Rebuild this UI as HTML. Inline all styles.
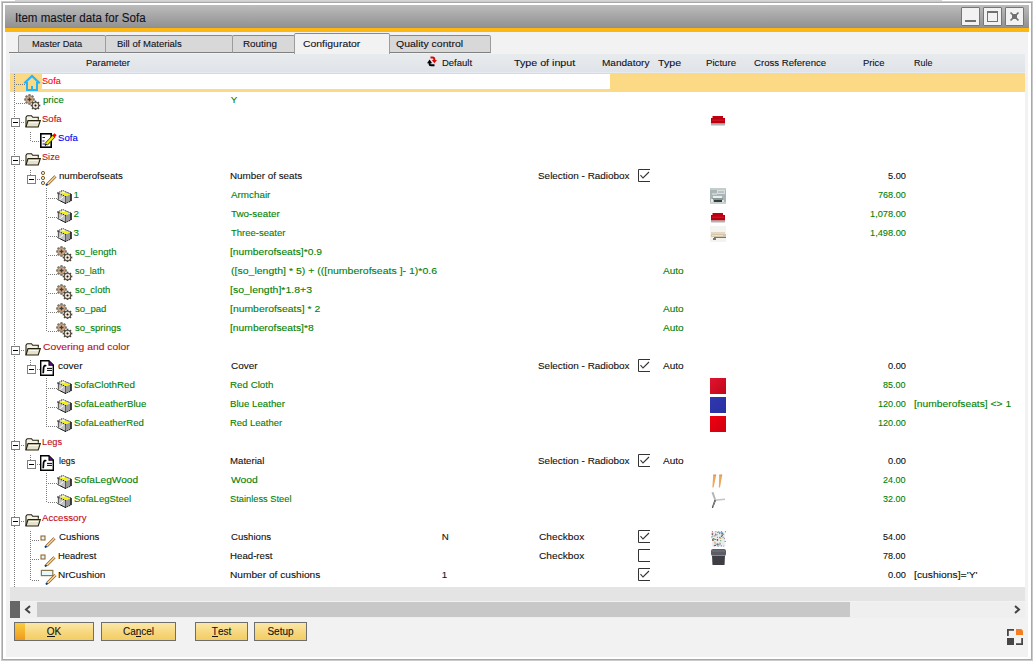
<!DOCTYPE html>
<html><head><meta charset="utf-8">
<style>
*{box-sizing:border-box}
html,body{margin:0;padding:0;width:1036px;height:665px;overflow:hidden;background:#fff;font-family:"Liberation Sans",sans-serif;font-size:10px}
.a{position:absolute}
.t{position:absolute;white-space:nowrap;-webkit-text-stroke:0.1px currentColor}
.ic{position:absolute;line-height:0}
.ic svg{display:block}
.vl{position:absolute;width:1px;background:repeating-linear-gradient(to bottom,#7a7a7a 0 1px,transparent 1px 2px)}
.hl{position:absolute;height:1px;background:repeating-linear-gradient(to right,#7a7a7a 0 1px,transparent 1px 2px)}
.tab{position:absolute;top:35px;height:18px;background:#d8d8d8;border:1px solid #9c9c9c;border-top-color:#888;border-bottom:1px solid #808080;border-radius:2px 2px 0 0}
.btn{position:absolute;top:622px;height:19px;-webkit-text-stroke:0.1px currentColor;border:1px solid #6e6e6e;background:linear-gradient(to bottom,#fbe7a8,#f6d67a 60%,#f3cd62);font-size:10px;line-height:17px;text-align:center;color:#141414}
.btn u{text-decoration:none;border-bottom:1px solid #141414;display:inline-block;line-height:9px}
.wb{position:absolute;top:7px;width:19px;height:19px;border:1px solid #767676;border-radius:1px;background:#f2f2f2}
</style></head><body>
<div class="a" style="left:15px;top:0;width:927px;height:1px;background:#d4d4d4"></div>
<div class="a" style="left:1px;top:1px;width:1032px;height:660px;background:#cacaca"></div>
<div class="a" style="left:2px;top:2px;width:1030px;height:658px;background:#a8a8a8"></div>
<div class="a" style="left:3px;top:3px;width:1028px;height:656px;background:#fff"></div>
<div class="a" style="left:6px;top:32px;width:1022px;height:625px;background:#f2f2f2"></div>
<div class="a" style="left:6px;top:32px;width:1022px;height:1px;background:#eef1f6"></div>
<div class="a" style="left:5px;top:5px;width:1024px;height:23px;background:linear-gradient(to bottom,#bcbcbc,#909090)"></div>
<div class="a" style="left:5px;top:27px;width:1024px;height:1px;background:#8a9098"></div>
<div class="a" style="left:5px;top:28px;width:1024px;height:4px;background:#fdb712"></div>
<div class="t" id="title" style="left:14.80px;top:7px;color:#14101a;font-size:12px;line-height:23px;height:23px;transform:scaleX(0.9647);transform-origin:0 0;">Item master data for Sofa</div>
<div class="wb" style="left:961px"><div class="a" style="left:3px;top:12px;width:11px;height:2px;background:#707070"></div></div>
<div class="wb" style="left:983px"><div class="a" style="left:3px;top:3px;width:11px;height:11px;border:1px solid #707070;border-top-width:2px"></div></div>
<div class="wb" style="left:1005px"><svg class="a" style="left:3px;top:3px" width="11" height="11" viewBox="0 0 11 11"><path d="M1.5 1.5 L9.5 9.5 M9.5 1.5 L1.5 9.5" stroke="#707070" stroke-width="1.7"/><rect x="3" y="3" width="5" height="5" fill="#707070"/></svg></div>

<div class="a" style="left:9px;top:52px;width:482px;height:1px;background:#808080"></div>
<div class="tab" style="left:18px;width:88px"></div>
<div class="tab" style="left:105px;width:128px"></div>
<div class="tab" style="left:232px;width:63px"></div>
<div class="tab" style="left:389px;width:102px"></div>
<div class="tab" style="left:294px;top:33px;height:21px;width:96px;background:#f2f2f2;border-bottom:none"></div>
<div class="t" id="tab_md" style="left:31.60px;top:36px;color:#101018;font-size:9.75px;line-height:16px;height:16px;transform:scaleX(0.9444);transform-origin:0 0;">Master Data</div>
<div class="t" id="tab_bom" style="left:117.40px;top:36px;color:#101018;font-size:9.75px;line-height:16px;height:16px;transform:scaleX(0.9788);transform-origin:0 0;">Bill of Materials</div>
<div class="t" id="tab_rt" style="left:242.90px;top:36px;color:#101018;font-size:9.75px;line-height:16px;height:16px;transform:scaleX(1.0088);transform-origin:0 0;">Routing</div>
<div class="t" id="tab_cf" style="left:303.20px;top:36px;color:#101018;font-size:9.75px;line-height:16px;height:16px;transform:scaleX(1.0685);transform-origin:0 0;">Configurator</div>
<div class="t" id="tab_qc" style="left:396.30px;top:36px;color:#101018;font-size:9.75px;line-height:16px;height:16px;transform:scaleX(1.0758);transform-origin:0 0;">Quality control</div>


<div class="a" style="left:10px;top:54px;width:1015px;height:19px;background:linear-gradient(to bottom,#e8ebee,#dfe3e7)"></div><div class="a" style="left:10px;top:72px;width:1015px;height:1px;background:#e5e9f1"></div>
<div class="a" style="left:10px;top:73px;width:1015px;height:514px;background:#fff"></div>
<div class="a" style="left:10px;top:587px;width:1015px;height:14px;background:#e4e4e4"></div>
<svg class="a" style="left:422px;top:52px" width="20" height="20" viewBox="0 0 20 20"><path d="M8.5 5.5 H10.5 Q12.3 5.5 12.3 7.3 V8.5" fill="none" stroke="#d40a0a" stroke-width="2"/><path d="M9.8 8 L15 8 L12.4 11.2 Z" fill="#d40a0a"/><path d="M7.6 11 V11.8 Q7.6 13.3 9.2 13.3 H12.5" fill="none" stroke="#000" stroke-width="2"/><path d="M5 11.2 L10.2 11.2 L7.6 7.6 Z" fill="#000"/></svg>
<div class="t" id="h_param" style="left:86.20px;top:53px;color:#101020;font-size:9.75px;line-height:19px;height:19px;transform:scaleX(0.9652);transform-origin:0 0;">Parameter</div>
<div class="t" id="h_def" style="left:442.20px;top:53px;color:#101020;font-size:9.75px;line-height:19px;height:19px;transform:scaleX(0.9719);transform-origin:0 0;">Default</div>
<div class="t" id="h_toi" style="left:513.80px;top:53px;color:#101020;font-size:9.75px;line-height:19px;height:19px;transform:scaleX(1.0964);transform-origin:0 0;">Type of input</div>
<div class="t" id="h_mand" style="left:602.30px;top:53px;color:#101020;font-size:9.75px;line-height:19px;height:19px;transform:scaleX(1.0298);transform-origin:0 0;">Mandatory</div>
<div class="t" id="h_type" style="left:658.10px;top:53px;color:#101020;font-size:9.75px;line-height:19px;height:19px;transform:scaleX(1.0905);transform-origin:0 0;">Type</div>
<div class="t" id="h_pic" style="left:706.20px;top:53px;color:#101020;font-size:9.75px;line-height:19px;height:19px;transform:scaleX(0.9903);transform-origin:0 0;">Picture</div>
<div class="t" id="h_xref" style="left:754.20px;top:53px;color:#101020;font-size:9.75px;line-height:19px;height:19px;transform:scaleX(0.9863);transform-origin:0 0;">Cross Reference</div>
<div class="t" id="h_price" style="left:862.60px;top:53px;color:#101020;font-size:9.75px;line-height:19px;height:19px;transform:scaleX(0.9682);transform-origin:0 0;">Price</div>
<div class="t" id="h_rule" style="left:914.30px;top:53px;color:#101020;font-size:9.75px;line-height:19px;height:19px;transform:scaleX(0.9150);transform-origin:0 0;">Rule</div>

<div class="a" style="left:10px;top:73px;width:1015px;height:19px;background:#fbd985"></div>
<div class="a" style="left:42px;top:74px;width:568px;height:15px;background:#fff"></div>
<div class="vl" style="left:14px;top:74px;height:513px"></div>
<div class="hl" style="left:16px;top:84px;width:9px"></div>
<div class="hl" style="left:16px;top:103px;width:9px"></div>
<div class="hl" style="left:21px;top:122px;width:4px"></div>
<div class="hl" style="left:32px;top:141px;width:8px"></div>
<div class="hl" style="left:21px;top:160px;width:4px"></div>
<div class="hl" style="left:37px;top:179px;width:4px"></div>
<div class="hl" style="left:48px;top:198px;width:9px"></div>
<div class="hl" style="left:48px;top:217px;width:9px"></div>
<div class="hl" style="left:48px;top:236px;width:9px"></div>
<div class="hl" style="left:48px;top:255px;width:9px"></div>
<div class="hl" style="left:48px;top:274px;width:9px"></div>
<div class="hl" style="left:48px;top:293px;width:9px"></div>
<div class="hl" style="left:48px;top:312px;width:9px"></div>
<div class="hl" style="left:48px;top:331px;width:9px"></div>
<div class="hl" style="left:21px;top:350px;width:4px"></div>
<div class="hl" style="left:37px;top:369px;width:4px"></div>
<div class="hl" style="left:48px;top:388px;width:9px"></div>
<div class="hl" style="left:48px;top:407px;width:9px"></div>
<div class="hl" style="left:48px;top:426px;width:9px"></div>
<div class="hl" style="left:21px;top:445px;width:4px"></div>
<div class="hl" style="left:37px;top:464px;width:4px"></div>
<div class="hl" style="left:48px;top:483px;width:9px"></div>
<div class="hl" style="left:48px;top:502px;width:9px"></div>
<div class="hl" style="left:21px;top:521px;width:4px"></div>
<div class="hl" style="left:32px;top:540px;width:8px"></div>
<div class="hl" style="left:32px;top:559px;width:8px"></div>
<div class="hl" style="left:32px;top:580px;width:8px"></div>
<div class="vl" style="left:30px;top:132px;height:10px"></div>
<div class="vl" style="left:30px;top:170px;height:10px"></div>
<div class="vl" style="left:46px;top:188px;height:144px"></div>
<div class="vl" style="left:30px;top:360px;height:10px"></div>
<div class="vl" style="left:46px;top:378px;height:49px"></div>
<div class="vl" style="left:30px;top:455px;height:10px"></div>
<div class="vl" style="left:46px;top:473px;height:30px"></div>
<div class="vl" style="left:30px;top:531px;height:50px"></div>
<div class="ic" style="left:11px;top:118px"><svg width="9" height="9" viewBox="0 0 9 9"><rect x="0.5" y="0.5" width="8" height="8" fill="#fff" stroke="#808080"/><path d="M2 4.5 H7" stroke="#000" stroke-width="1"/></svg></div>
<div class="ic" style="left:11px;top:156px"><svg width="9" height="9" viewBox="0 0 9 9"><rect x="0.5" y="0.5" width="8" height="8" fill="#fff" stroke="#808080"/><path d="M2 4.5 H7" stroke="#000" stroke-width="1"/></svg></div>
<div class="ic" style="left:27px;top:175px"><svg width="9" height="9" viewBox="0 0 9 9"><rect x="0.5" y="0.5" width="8" height="8" fill="#fff" stroke="#808080"/><path d="M2 4.5 H7" stroke="#000" stroke-width="1"/></svg></div>
<div class="ic" style="left:11px;top:346px"><svg width="9" height="9" viewBox="0 0 9 9"><rect x="0.5" y="0.5" width="8" height="8" fill="#fff" stroke="#808080"/><path d="M2 4.5 H7" stroke="#000" stroke-width="1"/></svg></div>
<div class="ic" style="left:27px;top:365px"><svg width="9" height="9" viewBox="0 0 9 9"><rect x="0.5" y="0.5" width="8" height="8" fill="#fff" stroke="#808080"/><path d="M2 4.5 H7" stroke="#000" stroke-width="1"/></svg></div>
<div class="ic" style="left:11px;top:441px"><svg width="9" height="9" viewBox="0 0 9 9"><rect x="0.5" y="0.5" width="8" height="8" fill="#fff" stroke="#808080"/><path d="M2 4.5 H7" stroke="#000" stroke-width="1"/></svg></div>
<div class="ic" style="left:27px;top:460px"><svg width="9" height="9" viewBox="0 0 9 9"><rect x="0.5" y="0.5" width="8" height="8" fill="#fff" stroke="#808080"/><path d="M2 4.5 H7" stroke="#000" stroke-width="1"/></svg></div>
<div class="ic" style="left:11px;top:517px"><svg width="9" height="9" viewBox="0 0 9 9"><rect x="0.5" y="0.5" width="8" height="8" fill="#fff" stroke="#808080"/><path d="M2 4.5 H7" stroke="#000" stroke-width="1"/></svg></div>
<div class="ic" style="left:23px;top:74px"><svg width="18" height="18" viewBox="0 0 18 18"><path d="M1.3 9.2 L9 2 L16.7 9.2" fill="none" stroke="#25b4fa" stroke-width="2.2"/><path d="M4 8 V16 H14 V8" fill="none" stroke="#25b4fa" stroke-width="2"/><rect x="8" y="12" width="2" height="4" fill="#25b4fa"/></svg></div>
<div class="t" id="p0" style="left:42.37px;top:71px;color:#ff0000;font-size:9.75px;line-height:19px;height:19px;transform:scaleX(0.9381);transform-origin:0 0;">Sofa</div>
<div class="ic" style="left:23px;top:92px"><svg width="18" height="18" viewBox="0 0 18 18"><g transform="translate(6.5,7.5)"><rect x="-1.1" y="-5.4" width="2.2" height="2.4" fill="#7e7c6c" transform="rotate(0)"/><rect x="-1.1" y="-5.4" width="2.2" height="2.4" fill="#7e7c6c" transform="rotate(45)"/><rect x="-1.1" y="-5.4" width="2.2" height="2.4" fill="#7e7c6c" transform="rotate(90)"/><rect x="-1.1" y="-5.4" width="2.2" height="2.4" fill="#7e7c6c" transform="rotate(135)"/><rect x="-1.1" y="-5.4" width="2.2" height="2.4" fill="#7e7c6c" transform="rotate(180)"/><rect x="-1.1" y="-5.4" width="2.2" height="2.4" fill="#7e7c6c" transform="rotate(225)"/><rect x="-1.1" y="-5.4" width="2.2" height="2.4" fill="#7e7c6c" transform="rotate(270)"/><rect x="-1.1" y="-5.4" width="2.2" height="2.4" fill="#7e7c6c" transform="rotate(315)"/><circle r="4.2" fill="#7e7c6c"/><circle r="3.3000000000000003" fill="#d9a886"/><path d="M-2 0 H2 M0 -2 V2" stroke="#3a4040" stroke-width="1.3"/></g><g transform="translate(12.5,13.5)"><rect x="-0.9" y="-4.8" width="1.8" height="2.4" fill="#4a4438" transform="rotate(0)"/><rect x="-0.9" y="-4.8" width="1.8" height="2.4" fill="#4a4438" transform="rotate(45)"/><rect x="-0.9" y="-4.8" width="1.8" height="2.4" fill="#4a4438" transform="rotate(90)"/><rect x="-0.9" y="-4.8" width="1.8" height="2.4" fill="#4a4438" transform="rotate(135)"/><rect x="-0.9" y="-4.8" width="1.8" height="2.4" fill="#4a4438" transform="rotate(180)"/><rect x="-0.9" y="-4.8" width="1.8" height="2.4" fill="#4a4438" transform="rotate(225)"/><rect x="-0.9" y="-4.8" width="1.8" height="2.4" fill="#4a4438" transform="rotate(270)"/><rect x="-0.9" y="-4.8" width="1.8" height="2.4" fill="#4a4438" transform="rotate(315)"/><circle r="3.6" fill="#4a4438"/><circle r="2.7" fill="#f0e4dc"/><path d="M-2.4 0 H2.4 M0 -2.4 V2.4" stroke="#e8c8b8" stroke-width="0.8"/><circle r="1" fill="#111"/></g></svg></div>
<div class="t" id="p1" style="left:42.99px;top:90px;color:#008000;font-size:9.75px;line-height:19px;height:19px;transform:scaleX(0.9818);transform-origin:0 0;">price</div>
<div class="t" id="d1" style="left:230.80px;top:90px;color:#008000;font-size:9.75px;line-height:19px;height:19px;">Y</div>
<div class="ic" style="left:25px;top:115px"><svg width="16" height="13" viewBox="0 0 16 13"><path d="M1 12 V2.2 L2.2 0.7 H6.5 L7.7 2.3 H13.3 V4.8" fill="#f4f2e4" stroke="#24200e" stroke-width="1.1"/><path d="M1 12 L3 5.6 H15.3 L13.2 12 Z" fill="#e6e3cc" stroke="#24200e" stroke-width="1.1"/><path d="M4 7.5 H13" stroke="#f8f8f0" stroke-width="1"/></svg></div>
<div class="t" id="p2" style="left:41.51px;top:109px;color:#c00c18;font-size:9.75px;line-height:19px;height:19px;transform:scaleX(0.9800);transform-origin:0 0;">Sofa</div>
<div class="ic" style="left:710px;top:115px"><svg width="16" height="12" viewBox="0 0 16 12"><rect x="2.5" y="1" width="10.5" height="3" fill="#c00012"/><rect x="1" y="3" width="14" height="5.5" fill="#b8000e"/><rect x="2" y="4.5" width="12" height="1.5" fill="#d01020"/><rect x="1" y="8.5" width="14" height="2" fill="#9aa0a0" opacity="0.8"/></svg></div>
<div class="ic" style="left:40px;top:133px"><svg width="17" height="15" viewBox="0 0 17 15"><rect x="0.8" y="0.8" width="10.4" height="13.4" fill="#fff" stroke="#000" stroke-width="1.6"/><path d="M2.5 4.5 H5 M2.5 8 H4.5 M2.5 11 H5" stroke="#1a2060" stroke-width="1.2"/><path d="M6.2 11.2 L14.2 2.8" stroke="#3a3a00" stroke-width="3.6"/><path d="M6.2 11.2 L14 3" stroke="#f0f000" stroke-width="2.2"/><path d="M13.3 3.5 L15.6 1.2" stroke="#ff0000" stroke-width="3"/><path d="M5 12.5 L6.5 11" stroke="#000" stroke-width="1.5"/></svg></div>
<div class="t" id="p3" style="left:57.81px;top:128px;color:#0000f0;font-size:9.75px;line-height:19px;height:19px;transform:scaleX(0.9850);transform-origin:0 0;">Sofa</div>
<div class="ic" style="left:25px;top:153px"><svg width="16" height="13" viewBox="0 0 16 13"><path d="M1 12 V2.2 L2.2 0.7 H6.5 L7.7 2.3 H13.3 V4.8" fill="#f4f2e4" stroke="#24200e" stroke-width="1.1"/><path d="M1 12 L3 5.6 H15.3 L13.2 12 Z" fill="#e6e3cc" stroke="#24200e" stroke-width="1.1"/><path d="M4 7.5 H13" stroke="#f8f8f0" stroke-width="1"/></svg></div>
<div class="t" id="p4" style="left:41.53px;top:147px;color:#c00c18;font-size:9.75px;line-height:19px;height:19px;transform:scaleX(0.9389);transform-origin:0 0;">Size</div>
<div class="ic" style="left:41px;top:171px"><svg width="17" height="15" viewBox="0 0 17 15"><g fill="#dffaff" stroke="#8a5a1a" stroke-width="1"><circle cx="2" cy="2" r="1.6"/><circle cx="2" cy="7" r="1.6"/><circle cx="2" cy="12" r="1.6"/></g><path d="M6.5 13.2 L14.5 5.2" stroke="#8a5a1a" stroke-width="3"/><path d="M6.5 13.2 L14.5 5.2" stroke="#f8d8a0" stroke-width="1.6"/><path d="M5 14.5 L6.5 13" stroke="#0a3a7a" stroke-width="2"/></svg></div>
<div class="t" id="p5" style="left:58.99px;top:166px;color:#101010;font-size:9.75px;line-height:19px;height:19px;transform:scaleX(0.9892);transform-origin:0 0;">numberofseats</div>
<div class="t" id="d5" style="left:229.80px;top:166px;color:#101010;font-size:9.75px;line-height:19px;height:19px;transform:scaleX(1.0085);transform-origin:0 0;">Number of seats</div>
<div class="t" id="ti5" style="left:537.69px;top:166px;color:#101010;font-size:9.75px;line-height:19px;height:19px;transform:scaleX(1.0178);transform-origin:0 0;">Selection - Radiobox</div>
<div class="ic" style="left:638px;top:169px"><svg width="13" height="13" viewBox="0 0 13 13"><path d="M12 0.5 H0.5 V12.5 H12" fill="none" stroke="#333" stroke-width="1"/><path d="M2.5 6.2 L5 9 L11 3" fill="none" stroke="#333" stroke-width="1.1"/></svg></div>
<div class="t" id="pr5" style="left:888.00px;top:166px;color:#101010;font-size:9.75px;line-height:19px;height:19px;transform:scaleX(0.9474);transform-origin:0 0;">5.00</div>
<div class="ic" style="left:57px;top:190px"><svg width="15" height="14" viewBox="0 0 15 14"><path d="M0.5 3 L5.5 0.5 L14.5 4 L14.5 11 L8.5 13.5 L0.5 9.5 Z" fill="#c4c4c4"/><path d="M8.5 6.5 L14.5 4 L14.5 11 L8.5 13.5 Z" fill="#9a9a9a"/><path d="M0.5 3 L5.5 0.5 L14.5 4 L8.5 6.5 Z" fill="#d8d8d8"/><path d="M2.5 3.2 L6 1.8 L12.5 4.5 L9 6 Z" fill="#f4f400"/><path d="M0.5 3 L5.5 0.5 L14 4 M8.5 13.5 L0.5 9.5 Z M0.5 3 L8.5 6.5 M8.5 6.5 V13.5 M8.5 13.5 L14 11" fill="none" stroke="#000" stroke-width="1" stroke-dasharray="1 1"/><path d="M14 4 V11" stroke="#000" stroke-width="1.3"/><path d="M1.5 3.5 V9.5" stroke="#000" stroke-width="1" stroke-dasharray="1 1"/><path d="M2.5 10 L6.5 6.5" stroke="#fff" stroke-width="1"/><rect x="5.5" y="1.5" width="2" height="1.5" fill="#fff"/></svg></div>
<div class="t" id="p6" style="left:73.50px;top:185px;color:#008000;font-size:9.75px;line-height:19px;height:19px;">1</div>
<div class="t" id="d6" style="left:230.81px;top:185px;color:#008000;font-size:9.75px;line-height:19px;height:19px;transform:scaleX(1.0100);transform-origin:0 0;">Armchair</div>
<div class="ic" style="left:710px;top:188px"><svg width="16" height="16" viewBox="0 0 16 16"><rect width="16" height="16" fill="#aab6b6"/><rect x="0" y="0" width="16" height="2" fill="#c4cccc"/><rect x="7" y="2" width="8" height="4" fill="#d6dede"/><path d="M8.5 4 H14" stroke="#6a7474" stroke-width="1" stroke-dasharray="1 1"/><rect x="2" y="5" width="5" height="2" fill="#c8d0d0"/><rect x="3" y="8" width="9" height="2" fill="#e8eeee"/><rect x="2" y="10" width="11" height="2" fill="#8c9898"/><rect x="4" y="12" width="9" height="2" fill="#353d3d"/><rect x="1" y="11" width="2" height="3" fill="#e6ecec"/><rect x="12" y="12" width="2" height="2" fill="#e0e6e6"/><rect x="0" y="14" width="16" height="2" fill="#c8d2d2"/></svg></div>
<div class="t" id="pr6" style="left:878.00px;top:185px;color:#008000;font-size:9.75px;line-height:19px;height:19px;transform:scaleX(0.9333);transform-origin:0 0;">768.00</div>
<div class="ic" style="left:57px;top:209px"><svg width="15" height="14" viewBox="0 0 15 14"><path d="M0.5 3 L5.5 0.5 L14.5 4 L14.5 11 L8.5 13.5 L0.5 9.5 Z" fill="#c4c4c4"/><path d="M8.5 6.5 L14.5 4 L14.5 11 L8.5 13.5 Z" fill="#9a9a9a"/><path d="M0.5 3 L5.5 0.5 L14.5 4 L8.5 6.5 Z" fill="#d8d8d8"/><path d="M2.5 3.2 L6 1.8 L12.5 4.5 L9 6 Z" fill="#f4f400"/><path d="M0.5 3 L5.5 0.5 L14 4 M8.5 13.5 L0.5 9.5 Z M0.5 3 L8.5 6.5 M8.5 6.5 V13.5 M8.5 13.5 L14 11" fill="none" stroke="#000" stroke-width="1" stroke-dasharray="1 1"/><path d="M14 4 V11" stroke="#000" stroke-width="1.3"/><path d="M1.5 3.5 V9.5" stroke="#000" stroke-width="1" stroke-dasharray="1 1"/><path d="M2.5 10 L6.5 6.5" stroke="#fff" stroke-width="1"/><rect x="5.5" y="1.5" width="2" height="1.5" fill="#fff"/></svg></div>
<div class="t" id="p7" style="left:73.50px;top:204px;color:#008000;font-size:9.75px;line-height:19px;height:19px;">2</div>
<div class="t" id="d7" style="left:230.81px;top:204px;color:#008000;font-size:9.75px;line-height:19px;height:19px;transform:scaleX(1.0102);transform-origin:0 0;">Two-seater</div>
<div class="ic" style="left:710px;top:212px"><svg width="16" height="12" viewBox="0 0 16 12"><rect x="2.5" y="1" width="10.5" height="3" fill="#c00012"/><rect x="1" y="3" width="14" height="5.5" fill="#b8000e"/><rect x="2" y="4.5" width="12" height="1.5" fill="#d01020"/><rect x="1" y="8.5" width="14" height="2" fill="#9aa0a0" opacity="0.8"/></svg></div>
<div class="t" id="pr7" style="left:870.00px;top:204px;color:#008000;font-size:9.75px;line-height:19px;height:19px;transform:scaleX(0.9474);transform-origin:0 0;">1,078.00</div>
<div class="ic" style="left:57px;top:228px"><svg width="15" height="14" viewBox="0 0 15 14"><path d="M0.5 3 L5.5 0.5 L14.5 4 L14.5 11 L8.5 13.5 L0.5 9.5 Z" fill="#c4c4c4"/><path d="M8.5 6.5 L14.5 4 L14.5 11 L8.5 13.5 Z" fill="#9a9a9a"/><path d="M0.5 3 L5.5 0.5 L14.5 4 L8.5 6.5 Z" fill="#d8d8d8"/><path d="M2.5 3.2 L6 1.8 L12.5 4.5 L9 6 Z" fill="#f4f400"/><path d="M0.5 3 L5.5 0.5 L14 4 M8.5 13.5 L0.5 9.5 Z M0.5 3 L8.5 6.5 M8.5 6.5 V13.5 M8.5 13.5 L14 11" fill="none" stroke="#000" stroke-width="1" stroke-dasharray="1 1"/><path d="M14 4 V11" stroke="#000" stroke-width="1.3"/><path d="M1.5 3.5 V9.5" stroke="#000" stroke-width="1" stroke-dasharray="1 1"/><path d="M2.5 10 L6.5 6.5" stroke="#fff" stroke-width="1"/><rect x="5.5" y="1.5" width="2" height="1.5" fill="#fff"/></svg></div>
<div class="t" id="p8" style="left:73.50px;top:223px;color:#008000;font-size:9.75px;line-height:19px;height:19px;">3</div>
<div class="t" id="d8" style="left:230.79px;top:223px;color:#008000;font-size:9.75px;line-height:19px;height:19px;transform:scaleX(0.9754);transform-origin:0 0;">Three-seater</div>
<div class="ic" style="left:710px;top:226px"><svg width="16" height="16" viewBox="0 0 16 16"><rect width="16" height="16" fill="#f5f3ef"/><rect x="1" y="6" width="14" height="2" fill="#e2d8c2"/><rect x="1" y="8" width="15" height="3" fill="#d4c8ac"/><rect x="2" y="9" width="11" height="1" fill="#e8e0cc"/><rect x="4" y="11" width="12" height="1" fill="#5a5650" opacity="0.8"/><rect x="3" y="12" width="3" height="2" fill="#7a7a7a"/></svg></div>
<div class="t" id="pr8" style="left:870.00px;top:223px;color:#008000;font-size:9.75px;line-height:19px;height:19px;transform:scaleX(0.9474);transform-origin:0 0;">1,498.00</div>
<div class="ic" style="left:55px;top:244px"><svg width="18" height="18" viewBox="0 0 18 18"><g transform="translate(6.5,7.5)"><rect x="-1.1" y="-5.4" width="2.2" height="2.4" fill="#7e7c6c" transform="rotate(0)"/><rect x="-1.1" y="-5.4" width="2.2" height="2.4" fill="#7e7c6c" transform="rotate(45)"/><rect x="-1.1" y="-5.4" width="2.2" height="2.4" fill="#7e7c6c" transform="rotate(90)"/><rect x="-1.1" y="-5.4" width="2.2" height="2.4" fill="#7e7c6c" transform="rotate(135)"/><rect x="-1.1" y="-5.4" width="2.2" height="2.4" fill="#7e7c6c" transform="rotate(180)"/><rect x="-1.1" y="-5.4" width="2.2" height="2.4" fill="#7e7c6c" transform="rotate(225)"/><rect x="-1.1" y="-5.4" width="2.2" height="2.4" fill="#7e7c6c" transform="rotate(270)"/><rect x="-1.1" y="-5.4" width="2.2" height="2.4" fill="#7e7c6c" transform="rotate(315)"/><circle r="4.2" fill="#7e7c6c"/><circle r="3.3000000000000003" fill="#d9a886"/><path d="M-2 0 H2 M0 -2 V2" stroke="#3a4040" stroke-width="1.3"/></g><g transform="translate(12.5,13.5)"><rect x="-0.9" y="-4.8" width="1.8" height="2.4" fill="#4a4438" transform="rotate(0)"/><rect x="-0.9" y="-4.8" width="1.8" height="2.4" fill="#4a4438" transform="rotate(45)"/><rect x="-0.9" y="-4.8" width="1.8" height="2.4" fill="#4a4438" transform="rotate(90)"/><rect x="-0.9" y="-4.8" width="1.8" height="2.4" fill="#4a4438" transform="rotate(135)"/><rect x="-0.9" y="-4.8" width="1.8" height="2.4" fill="#4a4438" transform="rotate(180)"/><rect x="-0.9" y="-4.8" width="1.8" height="2.4" fill="#4a4438" transform="rotate(225)"/><rect x="-0.9" y="-4.8" width="1.8" height="2.4" fill="#4a4438" transform="rotate(270)"/><rect x="-0.9" y="-4.8" width="1.8" height="2.4" fill="#4a4438" transform="rotate(315)"/><circle r="3.6" fill="#4a4438"/><circle r="2.7" fill="#f0e4dc"/><path d="M-2.4 0 H2.4 M0 -2.4 V2.4" stroke="#e8c8b8" stroke-width="0.8"/><circle r="1" fill="#111"/></g></svg></div>
<div class="t" id="p9" style="left:74.69px;top:242px;color:#008000;font-size:9.75px;line-height:19px;height:19px;transform:scaleX(0.9814);transform-origin:0 0;">so_length</div>
<div class="t" id="d9" style="left:229.77px;top:242px;color:#008000;font-size:9.75px;line-height:19px;height:19px;transform:scaleX(1.0540);transform-origin:0 0;">[numberofseats]*0.9</div>
<div class="ic" style="left:55px;top:263px"><svg width="18" height="18" viewBox="0 0 18 18"><g transform="translate(6.5,7.5)"><rect x="-1.1" y="-5.4" width="2.2" height="2.4" fill="#7e7c6c" transform="rotate(0)"/><rect x="-1.1" y="-5.4" width="2.2" height="2.4" fill="#7e7c6c" transform="rotate(45)"/><rect x="-1.1" y="-5.4" width="2.2" height="2.4" fill="#7e7c6c" transform="rotate(90)"/><rect x="-1.1" y="-5.4" width="2.2" height="2.4" fill="#7e7c6c" transform="rotate(135)"/><rect x="-1.1" y="-5.4" width="2.2" height="2.4" fill="#7e7c6c" transform="rotate(180)"/><rect x="-1.1" y="-5.4" width="2.2" height="2.4" fill="#7e7c6c" transform="rotate(225)"/><rect x="-1.1" y="-5.4" width="2.2" height="2.4" fill="#7e7c6c" transform="rotate(270)"/><rect x="-1.1" y="-5.4" width="2.2" height="2.4" fill="#7e7c6c" transform="rotate(315)"/><circle r="4.2" fill="#7e7c6c"/><circle r="3.3000000000000003" fill="#d9a886"/><path d="M-2 0 H2 M0 -2 V2" stroke="#3a4040" stroke-width="1.3"/></g><g transform="translate(12.5,13.5)"><rect x="-0.9" y="-4.8" width="1.8" height="2.4" fill="#4a4438" transform="rotate(0)"/><rect x="-0.9" y="-4.8" width="1.8" height="2.4" fill="#4a4438" transform="rotate(45)"/><rect x="-0.9" y="-4.8" width="1.8" height="2.4" fill="#4a4438" transform="rotate(90)"/><rect x="-0.9" y="-4.8" width="1.8" height="2.4" fill="#4a4438" transform="rotate(135)"/><rect x="-0.9" y="-4.8" width="1.8" height="2.4" fill="#4a4438" transform="rotate(180)"/><rect x="-0.9" y="-4.8" width="1.8" height="2.4" fill="#4a4438" transform="rotate(225)"/><rect x="-0.9" y="-4.8" width="1.8" height="2.4" fill="#4a4438" transform="rotate(270)"/><rect x="-0.9" y="-4.8" width="1.8" height="2.4" fill="#4a4438" transform="rotate(315)"/><circle r="3.6" fill="#4a4438"/><circle r="2.7" fill="#f0e4dc"/><path d="M-2.4 0 H2.4 M0 -2.4 V2.4" stroke="#e8c8b8" stroke-width="0.8"/><circle r="1" fill="#111"/></g></svg></div>
<div class="t" id="p10" style="left:74.67px;top:261px;color:#008000;font-size:9.75px;line-height:19px;height:19px;transform:scaleX(0.9406);transform-origin:0 0;">so_lath</div>
<div class="t" id="d10" style="left:230.84px;top:261px;color:#008000;font-size:9.75px;line-height:19px;height:19px;transform:scaleX(1.0786);transform-origin:0 0;">([so_length] * 5) + (([numberofseats ]- 1)*0.6</div>
<div class="t" id="t10" style="left:662.72px;top:261px;color:#008000;font-size:9.75px;line-height:19px;height:19px;transform:scaleX(1.0333);transform-origin:0 0;">Auto</div>
<div class="ic" style="left:55px;top:282px"><svg width="18" height="18" viewBox="0 0 18 18"><g transform="translate(6.5,7.5)"><rect x="-1.1" y="-5.4" width="2.2" height="2.4" fill="#7e7c6c" transform="rotate(0)"/><rect x="-1.1" y="-5.4" width="2.2" height="2.4" fill="#7e7c6c" transform="rotate(45)"/><rect x="-1.1" y="-5.4" width="2.2" height="2.4" fill="#7e7c6c" transform="rotate(90)"/><rect x="-1.1" y="-5.4" width="2.2" height="2.4" fill="#7e7c6c" transform="rotate(135)"/><rect x="-1.1" y="-5.4" width="2.2" height="2.4" fill="#7e7c6c" transform="rotate(180)"/><rect x="-1.1" y="-5.4" width="2.2" height="2.4" fill="#7e7c6c" transform="rotate(225)"/><rect x="-1.1" y="-5.4" width="2.2" height="2.4" fill="#7e7c6c" transform="rotate(270)"/><rect x="-1.1" y="-5.4" width="2.2" height="2.4" fill="#7e7c6c" transform="rotate(315)"/><circle r="4.2" fill="#7e7c6c"/><circle r="3.3000000000000003" fill="#d9a886"/><path d="M-2 0 H2 M0 -2 V2" stroke="#3a4040" stroke-width="1.3"/></g><g transform="translate(12.5,13.5)"><rect x="-0.9" y="-4.8" width="1.8" height="2.4" fill="#4a4438" transform="rotate(0)"/><rect x="-0.9" y="-4.8" width="1.8" height="2.4" fill="#4a4438" transform="rotate(45)"/><rect x="-0.9" y="-4.8" width="1.8" height="2.4" fill="#4a4438" transform="rotate(90)"/><rect x="-0.9" y="-4.8" width="1.8" height="2.4" fill="#4a4438" transform="rotate(135)"/><rect x="-0.9" y="-4.8" width="1.8" height="2.4" fill="#4a4438" transform="rotate(180)"/><rect x="-0.9" y="-4.8" width="1.8" height="2.4" fill="#4a4438" transform="rotate(225)"/><rect x="-0.9" y="-4.8" width="1.8" height="2.4" fill="#4a4438" transform="rotate(270)"/><rect x="-0.9" y="-4.8" width="1.8" height="2.4" fill="#4a4438" transform="rotate(315)"/><circle r="3.6" fill="#4a4438"/><circle r="2.7" fill="#f0e4dc"/><path d="M-2.4 0 H2.4 M0 -2.4 V2.4" stroke="#e8c8b8" stroke-width="0.8"/><circle r="1" fill="#111"/></g></svg></div>
<div class="t" id="p11" style="left:74.69px;top:280px;color:#008000;font-size:9.75px;line-height:19px;height:19px;transform:scaleX(0.9730);transform-origin:0 0;">so_cloth</div>
<div class="t" id="d11" style="left:229.76px;top:280px;color:#008000;font-size:9.75px;line-height:19px;height:19px;transform:scaleX(1.0763);transform-origin:0 0;">[so_length]*1.8+3</div>
<div class="ic" style="left:55px;top:301px"><svg width="18" height="18" viewBox="0 0 18 18"><g transform="translate(6.5,7.5)"><rect x="-1.1" y="-5.4" width="2.2" height="2.4" fill="#7e7c6c" transform="rotate(0)"/><rect x="-1.1" y="-5.4" width="2.2" height="2.4" fill="#7e7c6c" transform="rotate(45)"/><rect x="-1.1" y="-5.4" width="2.2" height="2.4" fill="#7e7c6c" transform="rotate(90)"/><rect x="-1.1" y="-5.4" width="2.2" height="2.4" fill="#7e7c6c" transform="rotate(135)"/><rect x="-1.1" y="-5.4" width="2.2" height="2.4" fill="#7e7c6c" transform="rotate(180)"/><rect x="-1.1" y="-5.4" width="2.2" height="2.4" fill="#7e7c6c" transform="rotate(225)"/><rect x="-1.1" y="-5.4" width="2.2" height="2.4" fill="#7e7c6c" transform="rotate(270)"/><rect x="-1.1" y="-5.4" width="2.2" height="2.4" fill="#7e7c6c" transform="rotate(315)"/><circle r="4.2" fill="#7e7c6c"/><circle r="3.3000000000000003" fill="#d9a886"/><path d="M-2 0 H2 M0 -2 V2" stroke="#3a4040" stroke-width="1.3"/></g><g transform="translate(12.5,13.5)"><rect x="-0.9" y="-4.8" width="1.8" height="2.4" fill="#4a4438" transform="rotate(0)"/><rect x="-0.9" y="-4.8" width="1.8" height="2.4" fill="#4a4438" transform="rotate(45)"/><rect x="-0.9" y="-4.8" width="1.8" height="2.4" fill="#4a4438" transform="rotate(90)"/><rect x="-0.9" y="-4.8" width="1.8" height="2.4" fill="#4a4438" transform="rotate(135)"/><rect x="-0.9" y="-4.8" width="1.8" height="2.4" fill="#4a4438" transform="rotate(180)"/><rect x="-0.9" y="-4.8" width="1.8" height="2.4" fill="#4a4438" transform="rotate(225)"/><rect x="-0.9" y="-4.8" width="1.8" height="2.4" fill="#4a4438" transform="rotate(270)"/><rect x="-0.9" y="-4.8" width="1.8" height="2.4" fill="#4a4438" transform="rotate(315)"/><circle r="3.6" fill="#4a4438"/><circle r="2.7" fill="#f0e4dc"/><path d="M-2.4 0 H2.4 M0 -2.4 V2.4" stroke="#e8c8b8" stroke-width="0.8"/><circle r="1" fill="#111"/></g></svg></div>
<div class="t" id="p12" style="left:74.69px;top:299px;color:#008000;font-size:9.75px;line-height:19px;height:19px;transform:scaleX(0.9812);transform-origin:0 0;">so_pad</div>
<div class="t" id="d12" style="left:229.77px;top:299px;color:#008000;font-size:9.75px;line-height:19px;height:19px;transform:scaleX(1.0667);transform-origin:0 0;">[numberofseats] * 2</div>
<div class="t" id="t12" style="left:662.72px;top:299px;color:#008000;font-size:9.75px;line-height:19px;height:19px;transform:scaleX(1.0333);transform-origin:0 0;">Auto</div>
<div class="ic" style="left:55px;top:320px"><svg width="18" height="18" viewBox="0 0 18 18"><g transform="translate(6.5,7.5)"><rect x="-1.1" y="-5.4" width="2.2" height="2.4" fill="#7e7c6c" transform="rotate(0)"/><rect x="-1.1" y="-5.4" width="2.2" height="2.4" fill="#7e7c6c" transform="rotate(45)"/><rect x="-1.1" y="-5.4" width="2.2" height="2.4" fill="#7e7c6c" transform="rotate(90)"/><rect x="-1.1" y="-5.4" width="2.2" height="2.4" fill="#7e7c6c" transform="rotate(135)"/><rect x="-1.1" y="-5.4" width="2.2" height="2.4" fill="#7e7c6c" transform="rotate(180)"/><rect x="-1.1" y="-5.4" width="2.2" height="2.4" fill="#7e7c6c" transform="rotate(225)"/><rect x="-1.1" y="-5.4" width="2.2" height="2.4" fill="#7e7c6c" transform="rotate(270)"/><rect x="-1.1" y="-5.4" width="2.2" height="2.4" fill="#7e7c6c" transform="rotate(315)"/><circle r="4.2" fill="#7e7c6c"/><circle r="3.3000000000000003" fill="#d9a886"/><path d="M-2 0 H2 M0 -2 V2" stroke="#3a4040" stroke-width="1.3"/></g><g transform="translate(12.5,13.5)"><rect x="-0.9" y="-4.8" width="1.8" height="2.4" fill="#4a4438" transform="rotate(0)"/><rect x="-0.9" y="-4.8" width="1.8" height="2.4" fill="#4a4438" transform="rotate(45)"/><rect x="-0.9" y="-4.8" width="1.8" height="2.4" fill="#4a4438" transform="rotate(90)"/><rect x="-0.9" y="-4.8" width="1.8" height="2.4" fill="#4a4438" transform="rotate(135)"/><rect x="-0.9" y="-4.8" width="1.8" height="2.4" fill="#4a4438" transform="rotate(180)"/><rect x="-0.9" y="-4.8" width="1.8" height="2.4" fill="#4a4438" transform="rotate(225)"/><rect x="-0.9" y="-4.8" width="1.8" height="2.4" fill="#4a4438" transform="rotate(270)"/><rect x="-0.9" y="-4.8" width="1.8" height="2.4" fill="#4a4438" transform="rotate(315)"/><circle r="3.6" fill="#4a4438"/><circle r="2.7" fill="#f0e4dc"/><path d="M-2.4 0 H2.4 M0 -2.4 V2.4" stroke="#e8c8b8" stroke-width="0.8"/><circle r="1" fill="#111"/></g></svg></div>
<div class="t" id="p13" style="left:74.69px;top:318px;color:#008000;font-size:9.75px;line-height:19px;height:19px;transform:scaleX(0.9750);transform-origin:0 0;">so_springs</div>
<div class="t" id="d13" style="left:229.77px;top:318px;color:#008000;font-size:9.75px;line-height:19px;height:19px;transform:scaleX(1.0570);transform-origin:0 0;">[numberofseats]*8</div>
<div class="t" id="t13" style="left:662.72px;top:318px;color:#008000;font-size:9.75px;line-height:19px;height:19px;transform:scaleX(1.0333);transform-origin:0 0;">Auto</div>
<div class="ic" style="left:25px;top:343px"><svg width="16" height="13" viewBox="0 0 16 13"><path d="M1 12 V2.2 L2.2 0.7 H6.5 L7.7 2.3 H13.3 V4.8" fill="#f4f2e4" stroke="#24200e" stroke-width="1.1"/><path d="M1 12 L3 5.6 H15.3 L13.2 12 Z" fill="#e6e3cc" stroke="#24200e" stroke-width="1.1"/><path d="M4 7.5 H13" stroke="#f8f8f0" stroke-width="1"/></svg></div>
<div class="t" id="p14" style="left:42.63px;top:337px;color:#c00c18;font-size:9.75px;line-height:19px;height:19px;transform:scaleX(1.0590);transform-origin:0 0;">Covering and color</div>
<div class="ic" style="left:40px;top:360px"><svg width="14" height="16" viewBox="0 0 14 16"><path d="M0.7 0.7 H8.8 L13.3 5 V15.3 H0.7 Z" fill="#fff" stroke="#000" stroke-width="1.4"/><path d="M9 1 L13 5 H9 Z" fill="#6a0aa8"/><path d="M9 0.7 V5.2 H13.3" fill="none" stroke="#000" stroke-width="1.1"/><path d="M3.2 13.2 L3.6 7.5 Q3.9 5.6 5.2 5.3" fill="none" stroke="#000" stroke-width="1.7"/><circle cx="5.6" cy="5.6" r="0.9" fill="#000"/><path d="M7 8.4 H12 M7 10.4 H12" stroke="#000" stroke-width="1"/></svg></div>
<div class="t" id="p15" style="left:58.41px;top:356px;color:#101010;font-size:9.75px;line-height:19px;height:19px;transform:scaleX(1.0280);transform-origin:0 0;">cover</div>
<div class="t" id="d15" style="left:230.81px;top:356px;color:#101010;font-size:9.75px;line-height:19px;height:19px;transform:scaleX(1.0222);transform-origin:0 0;">Cover</div>
<div class="t" id="ti15" style="left:537.69px;top:356px;color:#101010;font-size:9.75px;line-height:19px;height:19px;transform:scaleX(1.0178);transform-origin:0 0;">Selection - Radiobox</div>
<div class="ic" style="left:638px;top:359px"><svg width="13" height="13" viewBox="0 0 13 13"><path d="M12 0.5 H0.5 V12.5 H12" fill="none" stroke="#333" stroke-width="1"/><path d="M2.5 6.2 L5 9 L11 3" fill="none" stroke="#333" stroke-width="1.1"/></svg></div>
<div class="t" id="t15" style="left:662.72px;top:356px;color:#101010;font-size:9.75px;line-height:19px;height:19px;transform:scaleX(1.0333);transform-origin:0 0;">Auto</div>
<div class="t" id="pr15" style="left:888.00px;top:356px;color:#101010;font-size:9.75px;line-height:19px;height:19px;transform:scaleX(0.9474);transform-origin:0 0;">0.00</div>
<div class="ic" style="left:57px;top:380px"><svg width="15" height="14" viewBox="0 0 15 14"><path d="M0.5 3 L5.5 0.5 L14.5 4 L14.5 11 L8.5 13.5 L0.5 9.5 Z" fill="#c4c4c4"/><path d="M8.5 6.5 L14.5 4 L14.5 11 L8.5 13.5 Z" fill="#9a9a9a"/><path d="M0.5 3 L5.5 0.5 L14.5 4 L8.5 6.5 Z" fill="#d8d8d8"/><path d="M2.5 3.2 L6 1.8 L12.5 4.5 L9 6 Z" fill="#f4f400"/><path d="M0.5 3 L5.5 0.5 L14 4 M8.5 13.5 L0.5 9.5 Z M0.5 3 L8.5 6.5 M8.5 6.5 V13.5 M8.5 13.5 L14 11" fill="none" stroke="#000" stroke-width="1" stroke-dasharray="1 1"/><path d="M14 4 V11" stroke="#000" stroke-width="1.3"/><path d="M1.5 3.5 V9.5" stroke="#000" stroke-width="1" stroke-dasharray="1 1"/><path d="M2.5 10 L6.5 6.5" stroke="#fff" stroke-width="1"/><rect x="5.5" y="1.5" width="2" height="1.5" fill="#fff"/></svg></div>
<div class="t" id="p16" style="left:73.80px;top:375px;color:#008000;font-size:9.75px;line-height:19px;height:19px;transform:scaleX(1.0050);transform-origin:0 0;">SofaClothRed</div>
<div class="t" id="d16" style="left:229.80px;top:375px;color:#008000;font-size:9.75px;line-height:19px;height:19px;transform:scaleX(1.0023);transform-origin:0 0;">Red Cloth</div>
<div class="ic" style="left:710px;top:378px"><div style="width:16px;height:16px;background:linear-gradient(135deg,#e01430,#c00818)"></div></div>
<div class="t" id="pr16" style="left:883.00px;top:375px;color:#008000;font-size:9.75px;line-height:19px;height:19px;transform:scaleX(0.9200);transform-origin:0 0;">85.00</div>
<div class="ic" style="left:57px;top:399px"><svg width="15" height="14" viewBox="0 0 15 14"><path d="M0.5 3 L5.5 0.5 L14.5 4 L14.5 11 L8.5 13.5 L0.5 9.5 Z" fill="#c4c4c4"/><path d="M8.5 6.5 L14.5 4 L14.5 11 L8.5 13.5 Z" fill="#9a9a9a"/><path d="M0.5 3 L5.5 0.5 L14.5 4 L8.5 6.5 Z" fill="#d8d8d8"/><path d="M2.5 3.2 L6 1.8 L12.5 4.5 L9 6 Z" fill="#f4f400"/><path d="M0.5 3 L5.5 0.5 L14 4 M8.5 13.5 L0.5 9.5 Z M0.5 3 L8.5 6.5 M8.5 6.5 V13.5 M8.5 13.5 L14 11" fill="none" stroke="#000" stroke-width="1" stroke-dasharray="1 1"/><path d="M14 4 V11" stroke="#000" stroke-width="1.3"/><path d="M1.5 3.5 V9.5" stroke="#000" stroke-width="1" stroke-dasharray="1 1"/><path d="M2.5 10 L6.5 6.5" stroke="#fff" stroke-width="1"/><rect x="5.5" y="1.5" width="2" height="1.5" fill="#fff"/></svg></div>
<div class="t" id="p17" style="left:73.80px;top:394px;color:#008000;font-size:9.75px;line-height:19px;height:19px;transform:scaleX(0.9958);transform-origin:0 0;">SofaLeatherBlue</div>
<div class="t" id="d17" style="left:229.80px;top:394px;color:#008000;font-size:9.75px;line-height:19px;height:19px;transform:scaleX(0.9927);transform-origin:0 0;">Blue Leather</div>
<div class="ic" style="left:710px;top:397px"><div style="width:16px;height:16px;background:linear-gradient(135deg,#3038b0,#2830a0)"></div></div>
<div class="t" id="pr17" style="left:878.00px;top:394px;color:#008000;font-size:9.75px;line-height:19px;height:19px;transform:scaleX(0.9333);transform-origin:0 0;">120.00</div>
<div class="t" id="r17" style="left:914.07px;top:394px;color:#008000;font-size:9.75px;line-height:19px;height:19px;transform:scaleX(1.0543);transform-origin:0 0;">[numberofseats] &lt;&gt; 1</div>
<div class="ic" style="left:57px;top:418px"><svg width="15" height="14" viewBox="0 0 15 14"><path d="M0.5 3 L5.5 0.5 L14.5 4 L14.5 11 L8.5 13.5 L0.5 9.5 Z" fill="#c4c4c4"/><path d="M8.5 6.5 L14.5 4 L14.5 11 L8.5 13.5 Z" fill="#9a9a9a"/><path d="M0.5 3 L5.5 0.5 L14.5 4 L8.5 6.5 Z" fill="#d8d8d8"/><path d="M2.5 3.2 L6 1.8 L12.5 4.5 L9 6 Z" fill="#f4f400"/><path d="M0.5 3 L5.5 0.5 L14 4 M8.5 13.5 L0.5 9.5 Z M0.5 3 L8.5 6.5 M8.5 6.5 V13.5 M8.5 13.5 L14 11" fill="none" stroke="#000" stroke-width="1" stroke-dasharray="1 1"/><path d="M14 4 V11" stroke="#000" stroke-width="1.3"/><path d="M1.5 3.5 V9.5" stroke="#000" stroke-width="1" stroke-dasharray="1 1"/><path d="M2.5 10 L6.5 6.5" stroke="#fff" stroke-width="1"/><rect x="5.5" y="1.5" width="2" height="1.5" fill="#fff"/></svg></div>
<div class="t" id="p18" style="left:73.81px;top:413px;color:#008000;font-size:9.75px;line-height:19px;height:19px;transform:scaleX(0.9829);transform-origin:0 0;">SofaLeatherRed</div>
<div class="t" id="d18" style="left:229.81px;top:413px;color:#008000;font-size:9.75px;line-height:19px;height:19px;transform:scaleX(0.9722);transform-origin:0 0;">Red Leather</div>
<div class="ic" style="left:710px;top:416px"><div style="width:16px;height:16px;background:linear-gradient(135deg,#f00010,#d00010)"></div></div>
<div class="t" id="pr18" style="left:878.00px;top:413px;color:#008000;font-size:9.75px;line-height:19px;height:19px;transform:scaleX(0.9333);transform-origin:0 0;">120.00</div>
<div class="ic" style="left:25px;top:438px"><svg width="16" height="13" viewBox="0 0 16 13"><path d="M1 12 V2.2 L2.2 0.7 H6.5 L7.7 2.3 H13.3 V4.8" fill="#f4f2e4" stroke="#24200e" stroke-width="1.1"/><path d="M1 12 L3 5.6 H15.3 L13.2 12 Z" fill="#e6e3cc" stroke="#24200e" stroke-width="1.1"/><path d="M4 7.5 H13" stroke="#f8f8f0" stroke-width="1"/></svg></div>
<div class="t" id="p19" style="left:41.83px;top:432px;color:#c00c18;font-size:9.75px;line-height:19px;height:19px;transform:scaleX(0.9476);transform-origin:0 0;">Legs</div>
<div class="ic" style="left:40px;top:455px"><svg width="14" height="16" viewBox="0 0 14 16"><path d="M0.7 0.7 H8.8 L13.3 5 V15.3 H0.7 Z" fill="#fff" stroke="#000" stroke-width="1.4"/><path d="M9 1 L13 5 H9 Z" fill="#6a0aa8"/><path d="M9 0.7 V5.2 H13.3" fill="none" stroke="#000" stroke-width="1.1"/><path d="M3.2 13.2 L3.6 7.5 Q3.9 5.6 5.2 5.3" fill="none" stroke="#000" stroke-width="1.7"/><circle cx="5.6" cy="5.6" r="0.9" fill="#000"/><path d="M7 8.4 H12 M7 10.4 H12" stroke="#000" stroke-width="1"/></svg></div>
<div class="t" id="p20" style="left:58.75px;top:451px;color:#101010;font-size:9.75px;line-height:19px;height:19px;transform:scaleX(0.9000);transform-origin:0 0;">legs</div>
<div class="t" id="d20" style="left:229.81px;top:451px;color:#101010;font-size:9.75px;line-height:19px;height:19px;transform:scaleX(0.9882);transform-origin:0 0;">Material</div>
<div class="t" id="ti20" style="left:537.69px;top:451px;color:#101010;font-size:9.75px;line-height:19px;height:19px;transform:scaleX(1.0178);transform-origin:0 0;">Selection - Radiobox</div>
<div class="ic" style="left:638px;top:454px"><svg width="13" height="13" viewBox="0 0 13 13"><path d="M12 0.5 H0.5 V12.5 H12" fill="none" stroke="#333" stroke-width="1"/><path d="M2.5 6.2 L5 9 L11 3" fill="none" stroke="#333" stroke-width="1.1"/></svg></div>
<div class="t" id="t20" style="left:662.72px;top:451px;color:#101010;font-size:9.75px;line-height:19px;height:19px;transform:scaleX(1.0333);transform-origin:0 0;">Auto</div>
<div class="t" id="pr20" style="left:888.00px;top:451px;color:#101010;font-size:9.75px;line-height:19px;height:19px;transform:scaleX(0.9474);transform-origin:0 0;">0.00</div>
<div class="ic" style="left:57px;top:475px"><svg width="15" height="14" viewBox="0 0 15 14"><path d="M0.5 3 L5.5 0.5 L14.5 4 L14.5 11 L8.5 13.5 L0.5 9.5 Z" fill="#c4c4c4"/><path d="M8.5 6.5 L14.5 4 L14.5 11 L8.5 13.5 Z" fill="#9a9a9a"/><path d="M0.5 3 L5.5 0.5 L14.5 4 L8.5 6.5 Z" fill="#d8d8d8"/><path d="M2.5 3.2 L6 1.8 L12.5 4.5 L9 6 Z" fill="#f4f400"/><path d="M0.5 3 L5.5 0.5 L14 4 M8.5 13.5 L0.5 9.5 Z M0.5 3 L8.5 6.5 M8.5 6.5 V13.5 M8.5 13.5 L14 11" fill="none" stroke="#000" stroke-width="1" stroke-dasharray="1 1"/><path d="M14 4 V11" stroke="#000" stroke-width="1.3"/><path d="M1.5 3.5 V9.5" stroke="#000" stroke-width="1" stroke-dasharray="1 1"/><path d="M2.5 10 L6.5 6.5" stroke="#fff" stroke-width="1"/><rect x="5.5" y="1.5" width="2" height="1.5" fill="#fff"/></svg></div>
<div class="t" id="p21" style="left:73.78px;top:470px;color:#008000;font-size:9.75px;line-height:19px;height:19px;transform:scaleX(1.0410);transform-origin:0 0;">SofaLegWood</div>
<div class="t" id="d21" style="left:230.83px;top:470px;color:#008000;font-size:9.75px;line-height:19px;height:19px;transform:scaleX(1.0615);transform-origin:0 0;">Wood</div>
<div class="ic" style="left:710px;top:474px"><svg width="16" height="15" viewBox="0 0 16 15"><path d="M3.2 1 H6.2 L3.6 13.5 H2.4 Z" fill="#eaa85a"/><path d="M9.2 1 H12.2 L10 13.5 H8.8 Z" fill="#eaa85a"/><path d="M3.2 1 H6.2 M9.2 1 H12.2" stroke="#b89a70" stroke-width="1"/></svg></div>
<div class="t" id="pr21" style="left:883.00px;top:470px;color:#008000;font-size:9.75px;line-height:19px;height:19px;transform:scaleX(0.9200);transform-origin:0 0;">24.00</div>
<div class="ic" style="left:57px;top:494px"><svg width="15" height="14" viewBox="0 0 15 14"><path d="M0.5 3 L5.5 0.5 L14.5 4 L14.5 11 L8.5 13.5 L0.5 9.5 Z" fill="#c4c4c4"/><path d="M8.5 6.5 L14.5 4 L14.5 11 L8.5 13.5 Z" fill="#9a9a9a"/><path d="M0.5 3 L5.5 0.5 L14.5 4 L8.5 6.5 Z" fill="#d8d8d8"/><path d="M2.5 3.2 L6 1.8 L12.5 4.5 L9 6 Z" fill="#f4f400"/><path d="M0.5 3 L5.5 0.5 L14 4 M8.5 13.5 L0.5 9.5 Z M0.5 3 L8.5 6.5 M8.5 6.5 V13.5 M8.5 13.5 L14 11" fill="none" stroke="#000" stroke-width="1" stroke-dasharray="1 1"/><path d="M14 4 V11" stroke="#000" stroke-width="1.3"/><path d="M1.5 3.5 V9.5" stroke="#000" stroke-width="1" stroke-dasharray="1 1"/><path d="M2.5 10 L6.5 6.5" stroke="#fff" stroke-width="1"/><rect x="5.5" y="1.5" width="2" height="1.5" fill="#fff"/></svg></div>
<div class="t" id="p22" style="left:73.81px;top:489px;color:#008000;font-size:9.75px;line-height:19px;height:19px;transform:scaleX(0.9776);transform-origin:0 0;">SofaLegSteel</div>
<div class="t" id="d22" style="left:229.82px;top:489px;color:#008000;font-size:9.75px;line-height:19px;height:19px;transform:scaleX(0.9531);transform-origin:0 0;">Stainless Steel</div>
<div class="ic" style="left:710px;top:491px"><svg width="16" height="18" viewBox="0 0 16 18"><path d="M4.5 8.5 L15 7.5 L15 9 L5 10" fill="#c4c4c8"/><path d="M1.5 1.5 L3.5 1 L6 8.5 L4.5 9.5 Z" fill="#b4b4b8"/><path d="M4.5 9 L6 9.5 L3 17 L1.8 16.5 Z" fill="#2a2a2e"/><path d="M5.2 9.6 L2.8 16" stroke="#d0d0d0" stroke-width="0.6"/></svg></div>
<div class="t" id="pr22" style="left:883.00px;top:489px;color:#008000;font-size:9.75px;line-height:19px;height:19px;transform:scaleX(0.9200);transform-origin:0 0;">32.00</div>
<div class="ic" style="left:25px;top:514px"><svg width="16" height="13" viewBox="0 0 16 13"><path d="M1 12 V2.2 L2.2 0.7 H6.5 L7.7 2.3 H13.3 V4.8" fill="#f4f2e4" stroke="#24200e" stroke-width="1.1"/><path d="M1 12 L3 5.6 H15.3 L13.2 12 Z" fill="#e6e3cc" stroke="#24200e" stroke-width="1.1"/><path d="M4 7.5 H13" stroke="#f8f8f0" stroke-width="1"/></svg></div>
<div class="t" id="p23" style="left:42.49px;top:508px;color:#c00c18;font-size:9.75px;line-height:19px;height:19px;transform:scaleX(0.9891);transform-origin:0 0;">Accessory</div>
<div class="ic" style="left:40px;top:533px"><svg width="17" height="15" viewBox="0 0 17 15"><rect x="1" y="3" width="4" height="4" fill="#dffaff" stroke="#8a5a1a" stroke-width="1"/><path d="M6.5 13.2 L14.5 5.2" stroke="#8a5a1a" stroke-width="3"/><path d="M6.5 13.2 L14.5 5.2" stroke="#f8d8a0" stroke-width="1.6"/><path d="M5 14.5 L6.5 13" stroke="#0a3a7a" stroke-width="2"/></svg></div>
<div class="t" id="p24" style="left:58.80px;top:527px;color:#101010;font-size:9.75px;line-height:19px;height:19px;transform:scaleX(0.9927);transform-origin:0 0;">Cushions</div>
<div class="t" id="d24" style="left:230.79px;top:527px;color:#101010;font-size:9.75px;line-height:19px;height:19px;transform:scaleX(0.9854);transform-origin:0 0;">Cushions</div>
<div class="t" id="df24" style="left:441.80px;top:527px;color:#101010;font-size:9.75px;line-height:19px;height:19px;">N</div>
<div class="t" id="ti24" style="left:538.52px;top:527px;color:#101010;font-size:9.75px;line-height:19px;height:19px;transform:scaleX(1.0432);transform-origin:0 0;">Checkbox</div>
<div class="ic" style="left:638px;top:530px"><svg width="13" height="13" viewBox="0 0 13 13"><path d="M12 0.5 H0.5 V12.5 H12" fill="none" stroke="#333" stroke-width="1"/><path d="M2.5 6.2 L5 9 L11 3" fill="none" stroke="#333" stroke-width="1.1"/></svg></div>
<div class="ic" style="left:711px;top:531px"><svg width="15" height="16" viewBox="0 0 15 16"><path d="M0.5 0.5 H13.5 L14.5 15.5 H1 Z" fill="#ececec"/><rect x="6.3" y="8.4" width="1" height="1" fill="#c05070"/><rect x="6.3" y="12.8" width="1" height="1" fill="#303030"/><rect x="2.6" y="7.7" width="1" height="1" fill="#30a050"/><rect x="1.3" y="4.6" width="1" height="1" fill="#3070c0"/><rect x="7.5" y="13.4" width="1" height="1" fill="#d83030"/><rect x="8.3" y="5.9" width="1" height="1" fill="#c05070"/><rect x="9.2" y="9.2" width="1" height="1" fill="#30a050"/><rect x="8.7" y="12.5" width="1" height="1" fill="#3070c0"/><rect x="0.8" y="2.9" width="1" height="1" fill="#303030"/><rect x="8.4" y="11.7" width="1" height="1" fill="#808080"/><rect x="6.2" y="12.6" width="1" height="1" fill="#606060"/><rect x="3.3" y="4.4" width="1" height="1" fill="#d83030"/><rect x="9.3" y="6.9" width="1" height="1" fill="#e0a030"/><rect x="5.7" y="8.3" width="1" height="1" fill="#3070c0"/><rect x="9.9" y="4.7" width="1" height="1" fill="#303030"/><rect x="7.2" y="0.4" width="1" height="1" fill="#3070c0"/><rect x="5.6" y="12.7" width="1" height="1" fill="#20a0a0"/><rect x="0.9" y="0.3" width="1" height="1" fill="#d83030"/><rect x="3.0" y="13.9" width="1" height="1" fill="#d83030"/><rect x="6.6" y="14.7" width="1" height="1" fill="#20a0a0"/><rect x="5.9" y="8.5" width="1" height="1" fill="#303030"/><rect x="10.9" y="4.0" width="1" height="1" fill="#3070c0"/><rect x="4.4" y="0.2" width="1" height="1" fill="#20a0a0"/><rect x="10.6" y="1.8" width="1" height="1" fill="#303030"/><rect x="9.9" y="0.2" width="1" height="1" fill="#c05070"/><rect x="11.2" y="2.7" width="1" height="1" fill="#606060"/><rect x="2.6" y="7.6" width="1" height="1" fill="#30a050"/><rect x="5.9" y="5.8" width="1" height="1" fill="#20a0a0"/><rect x="5.9" y="3.2" width="1" height="1" fill="#e0a030"/><rect x="12.1" y="14.6" width="1" height="1" fill="#e0a030"/><rect x="14.0" y="0.3" width="1" height="1" fill="#30a050"/><rect x="5.5" y="12.8" width="1" height="1" fill="#3070c0"/><rect x="0.6" y="2.2" width="1" height="1" fill="#c05070"/><rect x="3.6" y="11.6" width="1" height="1" fill="#808080"/><rect x="11.6" y="5.8" width="1" height="1" fill="#3070c0"/><rect x="1.3" y="8.7" width="1" height="1" fill="#303030"/><rect x="0.2" y="5.5" width="1" height="1" fill="#c05070"/><rect x="1.8" y="8.8" width="1" height="1" fill="#30a050"/><rect x="12.1" y="2.7" width="1" height="1" fill="#30a050"/><rect x="4.4" y="3.4" width="1" height="1" fill="#303030"/><rect x="10.2" y="2.4" width="1" height="1" fill="#606060"/><rect x="2.8" y="14.3" width="1" height="1" fill="#c05070"/><rect x="8.4" y="6.3" width="1" height="1" fill="#3070c0"/><rect x="1.5" y="7.7" width="1" height="1" fill="#e0a030"/><rect x="3.3" y="10.6" width="1" height="1" fill="#e0a030"/><rect x="5.9" y="13.6" width="1" height="1" fill="#c05070"/><rect x="4.1" y="2.6" width="1" height="1" fill="#3070c0"/><rect x="1.8" y="7.2" width="1" height="1" fill="#3070c0"/><rect x="3.9" y="13.8" width="1" height="1" fill="#303030"/><rect x="10.5" y="1.0" width="1" height="1" fill="#20a0a0"/><rect x="6.2" y="0.9" width="1" height="1" fill="#30a050"/><rect x="3.9" y="8.0" width="1" height="1" fill="#30a050"/><rect x="1.3" y="2.1" width="1" height="1" fill="#c05070"/><rect x="13.7" y="9.9" width="1" height="1" fill="#606060"/><rect x="8.2" y="2.1" width="1" height="1" fill="#d83030"/><rect x="12.9" y="7.1" width="1" height="1" fill="#808080"/><rect x="9.8" y="14.4" width="1" height="1" fill="#d83030"/><rect x="8.4" y="1.1" width="1" height="1" fill="#3070c0"/><rect x="10.2" y="4.8" width="1" height="1" fill="#3070c0"/><rect x="1.1" y="8.2" width="1" height="1" fill="#d83030"/></svg></div>
<div class="t" id="pr24" style="left:883.00px;top:527px;color:#101010;font-size:9.75px;line-height:19px;height:19px;transform:scaleX(0.9200);transform-origin:0 0;">54.00</div>
<div class="ic" style="left:40px;top:552px"><svg width="17" height="15" viewBox="0 0 17 15"><rect x="1" y="3" width="4" height="4" fill="#dffaff" stroke="#8a5a1a" stroke-width="1"/><path d="M6.5 13.2 L14.5 5.2" stroke="#8a5a1a" stroke-width="3"/><path d="M6.5 13.2 L14.5 5.2" stroke="#f8d8a0" stroke-width="1.6"/><path d="M5 14.5 L6.5 13" stroke="#0a3a7a" stroke-width="2"/></svg></div>
<div class="t" id="p25" style="left:57.81px;top:546px;color:#101010;font-size:9.75px;line-height:19px;height:19px;transform:scaleX(0.9700);transform-origin:0 0;">Headrest</div>
<div class="t" id="d25" style="left:229.80px;top:546px;color:#101010;font-size:9.75px;line-height:19px;height:19px;transform:scaleX(0.9930);transform-origin:0 0;">Head-rest</div>
<div class="t" id="ti25" style="left:538.52px;top:546px;color:#101010;font-size:9.75px;line-height:19px;height:19px;transform:scaleX(1.0432);transform-origin:0 0;">Checkbox</div>
<div class="ic" style="left:638px;top:549px"><svg width="13" height="13" viewBox="0 0 13 13"><path d="M12 0.5 H0.5 V12.5 H12" fill="none" stroke="#333" stroke-width="1"/></svg></div>
<div class="ic" style="left:711px;top:549px"><svg width="15" height="16" viewBox="0 0 15 16"><rect x="0" y="0" width="15" height="7" rx="2" fill="#5c5c66"/><rect x="1" y="1" width="13" height="2" fill="#6a6a74"/><path d="M1 7 H14 L13.5 16 H1.5 Z" fill="#3e3e44"/><rect x="1" y="6" width="13" height="1" fill="#8a8a96"/></svg></div>
<div class="t" id="pr25" style="left:883.00px;top:546px;color:#101010;font-size:9.75px;line-height:19px;height:19px;transform:scaleX(0.9200);transform-origin:0 0;">78.00</div>
<div class="ic" style="left:40px;top:569px"><svg width="17" height="16" viewBox="0 0 17 16"><rect x="1.4" y="1.4" width="11.4" height="5.2" fill="#e6f8ff" stroke="#8a7a4a" stroke-width="1.2"/><path d="M7.5 14 L15.5 6" stroke="#8a5a1a" stroke-width="3"/><path d="M7.5 14 L15.5 6" stroke="#f8d8a0" stroke-width="1.6"/><path d="M6 15.5 L7.5 14" stroke="#0a3a7a" stroke-width="2"/></svg></div>
<div class="t" id="p26" style="left:57.79px;top:565px;color:#101010;font-size:9.75px;line-height:19px;height:19px;transform:scaleX(1.0283);transform-origin:0 0;">NrCushion</div>
<div class="t" id="d26" style="left:229.78px;top:565px;color:#101010;font-size:9.75px;line-height:19px;height:19px;transform:scaleX(1.0419);transform-origin:0 0;">Number of cushions</div>
<div class="t" id="df26" style="left:441.80px;top:565px;color:#101010;font-size:9.75px;line-height:19px;height:19px;">1</div>
<div class="ic" style="left:638px;top:568px"><svg width="13" height="13" viewBox="0 0 13 13"><path d="M12 0.5 H0.5 V12.5 H12" fill="none" stroke="#333" stroke-width="1"/><path d="M2.5 6.2 L5 9 L11 3" fill="none" stroke="#333" stroke-width="1.1"/></svg></div>
<div class="t" id="pr26" style="left:888.00px;top:565px;color:#101010;font-size:9.75px;line-height:19px;height:19px;transform:scaleX(0.9474);transform-origin:0 0;">0.00</div>
<div class="t" id="r26" style="left:913.77px;top:565px;color:#101010;font-size:9.75px;line-height:19px;height:19px;transform:scaleX(1.0617);transform-origin:0 0;">[cushions]='Y'</div>

<div class="a" style="left:10px;top:602px;width:1015px;height:16px;background:#efefef"></div>
<div class="a" style="left:10px;top:601px;width:10px;height:17px;background:#666"></div>
<div class="a" style="left:37px;top:602px;width:813px;height:15px;background:#c8c8c8"></div>
<svg class="a" style="left:24px;top:605px" width="8" height="9"><path d="M6 1 L2 4.5 L6 8" fill="none" stroke="#444" stroke-width="2"/></svg>
<svg class="a" style="left:1013px;top:605px" width="8" height="9"><path d="M2 1 L6 4.5 L2 8" fill="none" stroke="#444" stroke-width="2"/></svg>

<div class="btn" style="left:14px;width:80px;background:linear-gradient(to bottom,#f9cc40,#f09a1c) 0 0/10px 100% no-repeat,linear-gradient(to bottom,#fbe7a8,#f6d67a 60%,#f3cd62)"><u>O</u>K</div>
<div class="btn" style="left:101px;width:75px">Ca<u>n</u>cel</div>
<div class="btn" style="left:195px;width:53px"><u>T</u>est</div>
<div class="btn" style="left:254px;width:53px">Setup</div>

<svg class="a" style="left:1007px;top:629px" width="17" height="17" viewBox="0 0 17 17"><path d="M0.9 7 V0.9 H7" fill="none" stroke="#464646" stroke-width="1.8"/><path d="M9 0 H13 Q16 0 16 3 V6 H9 Z" fill="#f57d1f"/><rect x="0" y="9" width="7" height="7" fill="#464646"/><path d="M9 15.1 H15.1 V9" fill="none" stroke="#464646" stroke-width="1.8"/></svg>
</body></html>
